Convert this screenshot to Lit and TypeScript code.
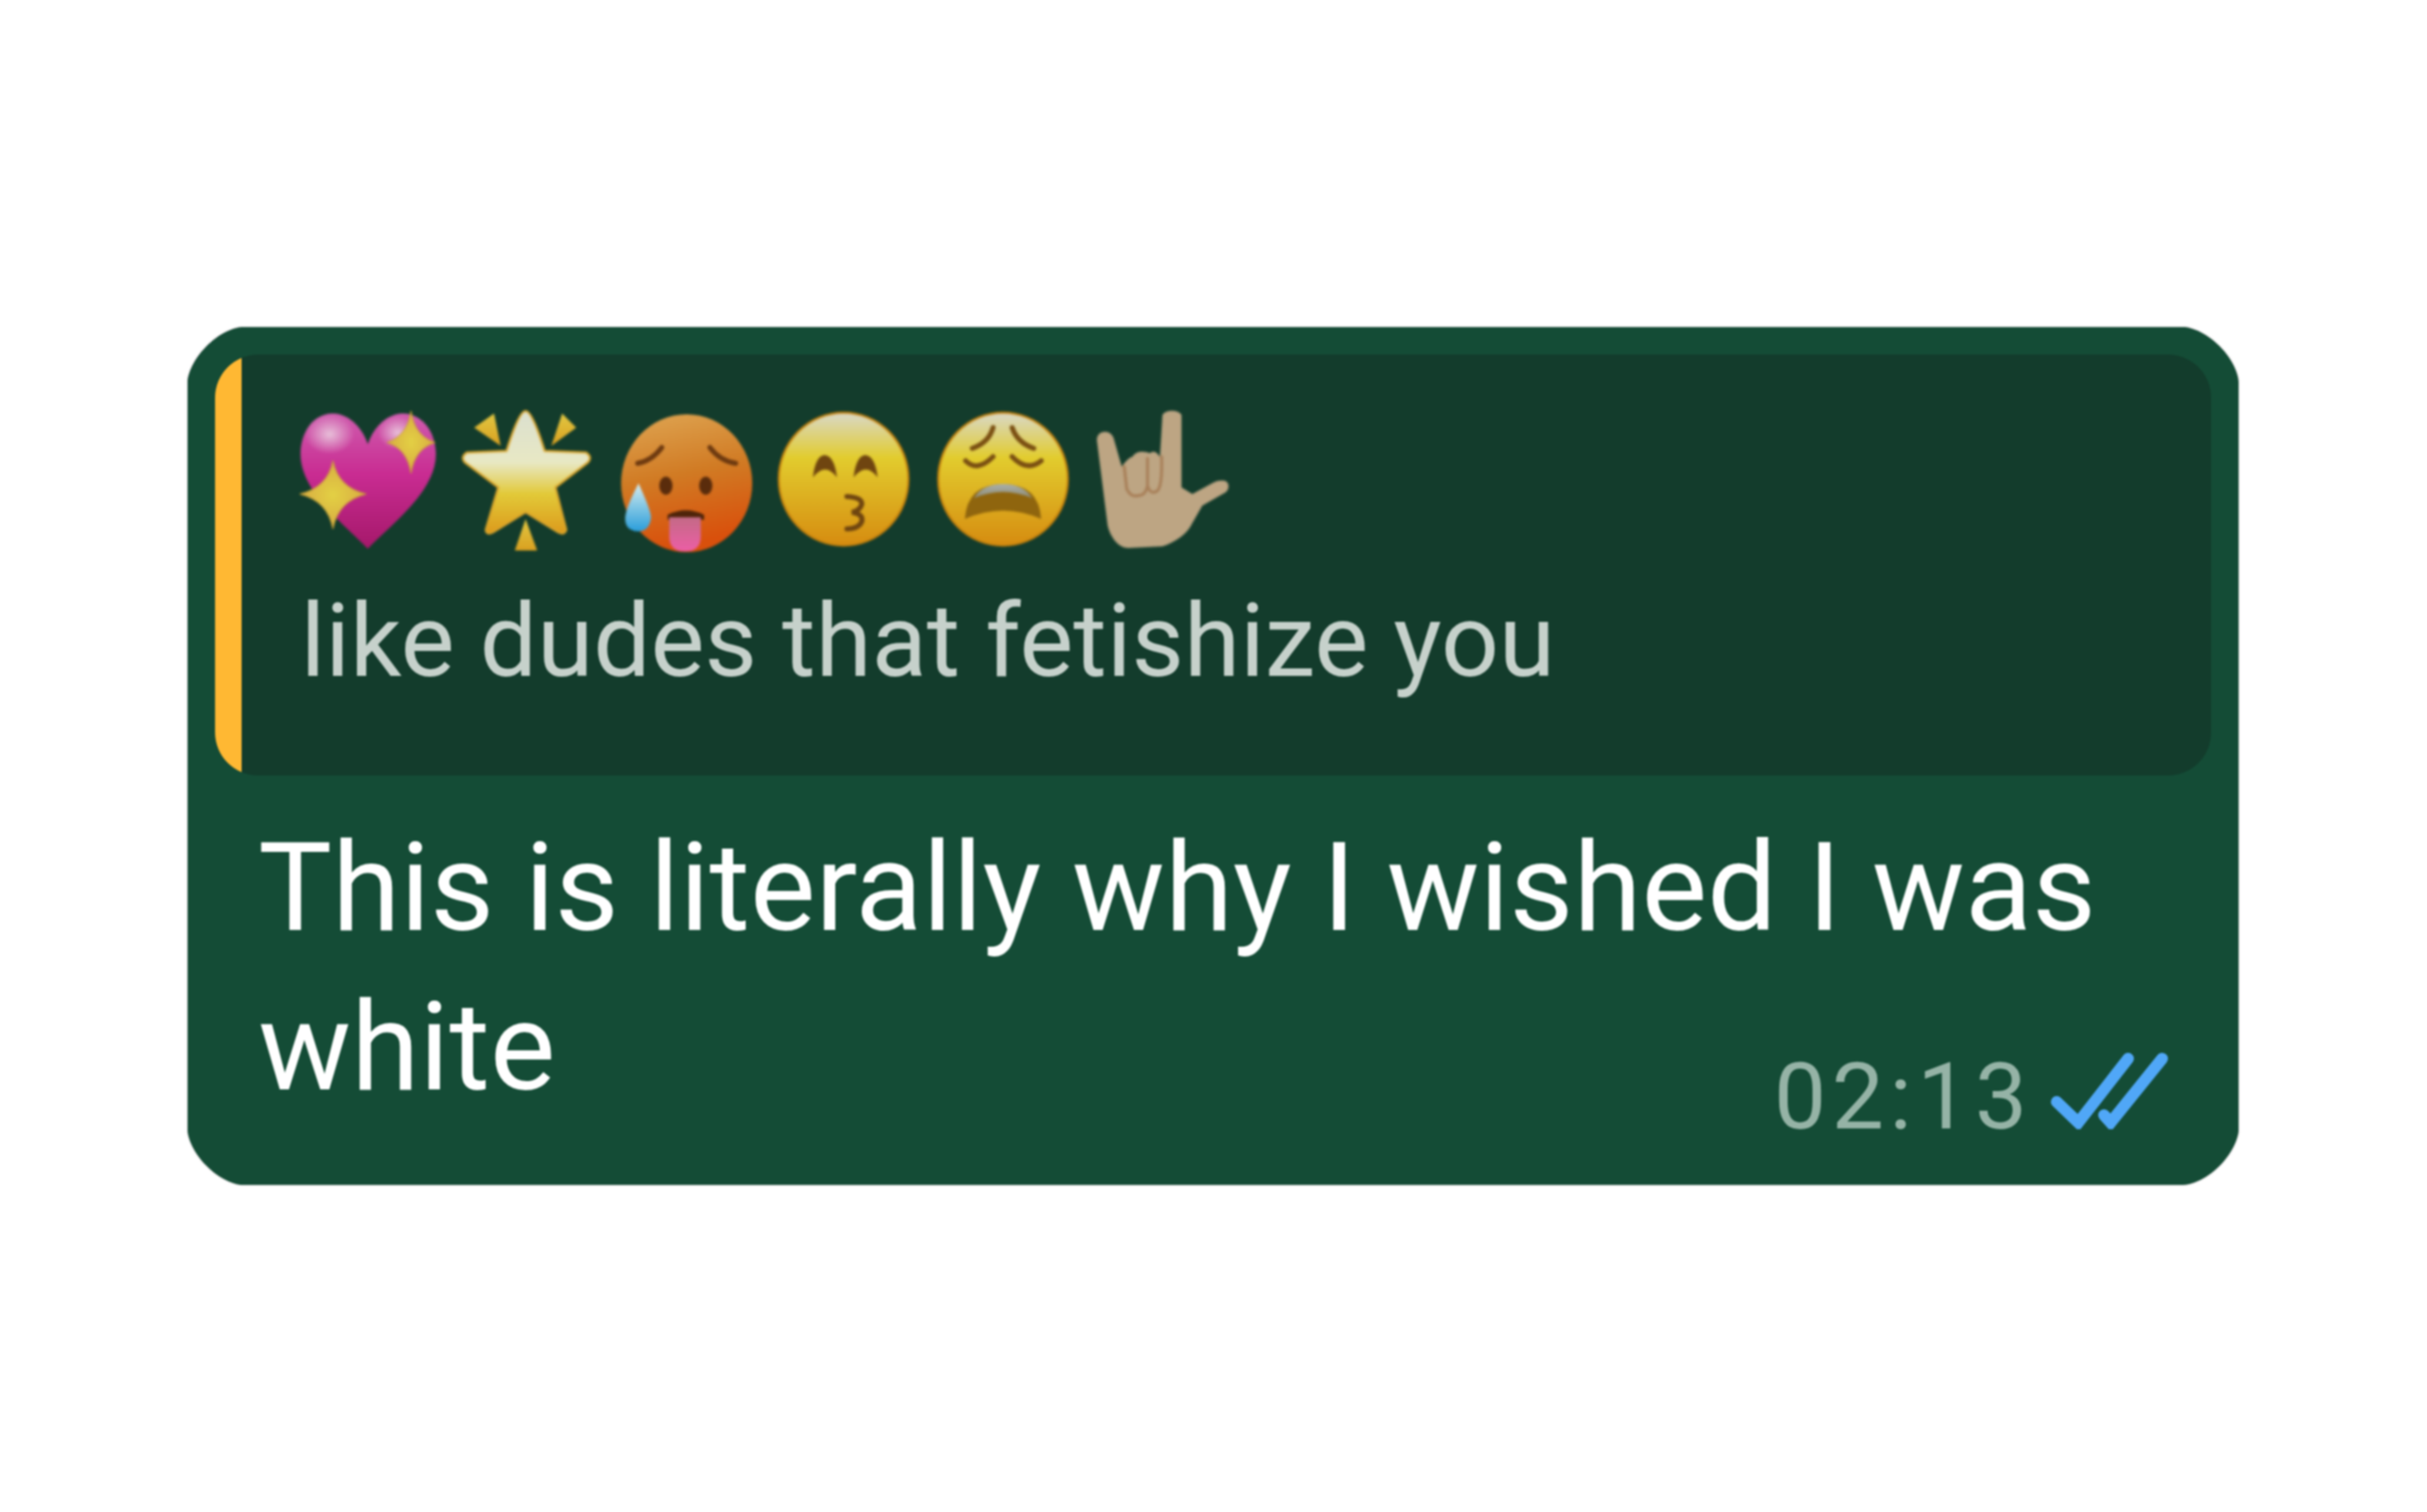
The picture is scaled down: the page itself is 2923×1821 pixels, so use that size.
import { LitElement, html, css, svg } from "lit";
import { customElement } from "lit/decorators.js";

const sparkle = (cx: number, cy: number, w: number, up: number, down: number) =>
  svg`<path d="M${cx} ${cy - up} Q${cx + w * 0.16} ${cy - up * 0.2} ${cx + w} ${cy} Q${cx + w * 0.16} ${cy + down * 0.2} ${cx} ${cy + down} Q${cx - w * 0.16} ${cy + down * 0.2} ${cx - w} ${cy} Q${cx - w * 0.16} ${cy - up * 0.2} ${cx} ${cy - up}Z" fill="url(#spark)" stroke="#c8a032" stroke-width="1"/>`;

const defs = svg`<defs>
  <linearGradient id="heart" x1="0" y1="0" x2="0" y2="1"><stop offset="0" stop-color="#cf5cae"/><stop offset=".45" stop-color="#c92c92"/><stop offset="1" stop-color="#a5186a"/></linearGradient>
  <radialGradient id="gloss"><stop offset="0" stop-color="#ecd3e2" stop-opacity=".85"/><stop offset="1" stop-color="#ecd3e2" stop-opacity="0"/></radialGradient>
  <radialGradient id="spark"><stop offset="0" stop-color="#e3d044"/><stop offset="1" stop-color="#d8ac42"/></radialGradient>
  <linearGradient id="star" x1="0" y1="0" x2="0" y2="1"><stop offset="0" stop-color="#dbe0cf"/><stop offset=".42" stop-color="#e8e8c4"/><stop offset=".68" stop-color="#e2c938"/><stop offset="1" stop-color="#dc9a1c"/></linearGradient>
  <linearGradient id="spike" x1="0" y1="0" x2="0" y2="1"><stop offset="0" stop-color="#e2c842"/><stop offset="1" stop-color="#d9a020"/></linearGradient>
  <linearGradient id="hot" x1="0" y1="0" x2=".2" y2="1"><stop offset="0" stop-color="#dfa653"/><stop offset=".5" stop-color="#d17b24"/><stop offset="1" stop-color="#d9500c"/></linearGradient>
  <linearGradient id="yellow" x1="0" y1="0" x2="0" y2="1"><stop offset="0" stop-color="#d9d8c8"/><stop offset=".34" stop-color="#e2cc2e"/><stop offset="1" stop-color="#d68c10"/></linearGradient>
  <linearGradient id="drop" x1="0" y1="0" x2="0" y2="1"><stop offset="0" stop-color="#d6ecee"/><stop offset="1" stop-color="#2a9edb"/></linearGradient>
  <linearGradient id="tongue" x1="0" y1="0" x2="0" y2="1"><stop offset="0" stop-color="#c46a86"/><stop offset="1" stop-color="#ec5ea6"/></linearGradient>
  <linearGradient id="teeth" x1="0" y1="0" x2="0" y2="1"><stop offset="0" stop-color="#aab0ac"/><stop offset="1" stop-color="#8d8a70"/></linearGradient>
</defs>`;

const emojis = [
  svg`<path d="M86 42C78 18 60 5 44 5C20 5 5 28 5 54C5 100 60 140 86 168C112 140 168 100 168 54C168 28 152 5 128 5C112 5 94 18 86 42Z" fill="url(#heart)"/>
    <ellipse cx="40" cy="30" rx="30" ry="24" fill="url(#gloss)"/>
    <ellipse cx="122" cy="28" rx="24" ry="20" fill="url(#gloss)"/>
    ${sparkle(138, 40, 29, 38, 37)}${sparkle(44, 102, 40, 40, 42)}`,
  svg`<path d="M47 5L23 22L55 44Z" fill="url(#spike)"/>
    <path d="M129 5L146 22L116 44Z" fill="url(#spike)"/>
    <path d="M85 132L99 170H72Z" fill="url(#spike)"/>
    <path d="M85 2Q93 2 108 50L158 52Q166 58 160 64L121 94L134 145Q132 152 124 148L85 124L46 148Q38 152 37 145L52 94L12 64Q6 58 14 52L62 50Q77 2 85 2Z" fill="url(#star)" stroke="#dca52a" stroke-width="2.5"/>`,
  svg`<ellipse cx="88" cy="89" rx="79" ry="83" fill="url(#hot)"/>
    <path d="M29 65Q46 62 58 46M116 46Q128 62 147 65" fill="none" stroke="#6e3a10" stroke-width="6" stroke-linecap="round"/>
    <ellipse cx="63" cy="92" rx="8" ry="11" fill="#5a2c0c"/><ellipse cx="111" cy="92" rx="8" ry="11" fill="#5a2c0c"/>
    <path d="M65 127Q87 116 109 127L109 133H65Z" fill="#4f2409"/>
    <path d="M67 130H105V153Q105 171 86 171Q67 171 67 153Z" fill="url(#tongue)"/>
    <path d="M30 89Q46 124 45 131Q43 147 29 147Q13 146 14 130Q15 118 30 89Z" fill="url(#drop)"/>`,
  svg`<ellipse cx="86" cy="84" rx="78" ry="80" fill="url(#yellow)" stroke="#c8820c" stroke-width="2.5"/>
    <path d="M49 82Q52 56 63 55Q75 56 78 82Q64 63 49 82ZM98 82Q101 56 112 55Q124 56 127 82Q113 63 98 82Z" fill="#6f4510"/>
    <path d="M90 105Q108 106 108 114Q106 122 96 124Q110 126 108 135Q104 144 90 144" fill="none" stroke="#6f4510" stroke-width="6" stroke-linecap="round"/>`,
  svg`<ellipse cx="87" cy="84" rx="78" ry="80" fill="url(#yellow)" stroke="#c8820c" stroke-width="2.5"/>
    <path d="M75 22Q70 40 50 47M98 22Q104 40 124 47M42 62Q56 76 75 57M98 57Q116 76 133 62" fill="none" stroke="#7a4f12" stroke-width="6" stroke-linecap="round"/>
    <path d="M41 132Q44 90 87 90Q130 90 133 132Q87 112 41 132Z" fill="#8f650e"/>
    <path d="M52 107Q62 90 87 90Q112 90 122 107Q87 92 52 107Z" fill="url(#teeth)"/>`,
  svg`<path d="M19 27C13 27 9 31 9 37L22 140C26 156 36 167 47 167L88 165C104 160 118 150 124 137L136 116L164 100C169 96 169 88 163 86C157 85 152 86 146 90L124 102L111 94V7C108 0 91 0 88 7L85 57C80 50 76 50 73 53C66 50 56 50 52 57C48 58 44 62 39 69L29 34C27 30 24 27 19 27Z" fill="#bda583"/>
    <path d="M42 69L45 96Q50 106 58 104Q68 104 70 92L70 59M70 92Q74 104 82 98Q88 92 87 57" fill="none" stroke="#a87f58" stroke-width="3.5" stroke-linecap="round"/>`,
];

@customElement("app-root")
export class AppRoot extends LitElement {
  static styles = css`
    :host {
      display: block;
      box-sizing: border-box;
      min-height: 1821px;
      padding: 394px 0 0 226px;
      background: #fff;
      font-family: Roboto, "Liberation Sans", sans-serif;
    }
    .bubble {
      box-sizing: border-box;
      width: 2470px;
      height: 1033px;
      padding: 33px 33px 0;
      border-radius: 66px;
      corner-shape: superellipse(0.7);
      background: #144c36;
      filter: blur(1.2px);
      box-shadow: 0 0 2px rgba(80, 80, 80, 0.7);
    }
    .quote {
      display: flex;
      height: 507px;
      overflow: hidden;
      border-radius: 52px;
      background: #133c2c;
    }
    .accent {
      flex: none;
      width: 32px;
      background: #ffb833;
    }
    .quote-body {
      padding: 66px 0 0 66px;
    }
    .emojis {
      display: flex;
      gap: 21px;
    }
    .emojis svg {
      flex: none;
      width: 170px;
      height: 170px;
      overflow: visible;
      filter: blur(1.2px);
    }
    .quote-text {
      margin: 37px 0 0 5px;
      color: #c6d1cb;
      font-size: 122.5px;
      line-height: 144px;
      white-space: nowrap;
    }
    .message {
      padding: 39px 0 0 52px;
      color: #fff;
      font-size: 149px;
      line-height: 192px;
    }
    .line {
      white-space: nowrap;
    }
    .last {
      display: flex;
      justify-content: space-between;
    }
    .meta {
      display: flex;
      align-items: flex-start;
      gap: 22px;
      align-self: flex-end;
      margin: 0 50px -14px 0;
    }
    .time {
      color: #95b3a6;
      font-size: 112px;
      letter-spacing: 6.5px;
      line-height: 100px;
    }
    .check {
      width: 143px;
      height: 95px;
      margin-top: -6px;
      fill: none;
      stroke: #50a7f7;
      stroke-width: 14;
      stroke-linecap: round;
    }
  `;

  render() {
    return html`
      <div class="bubble">
        <div class="quote">
          <div class="accent"></div>
          <div class="quote-body">
            <div class="emojis">
              ${emojis.map(
                (e, i) => html`<svg viewBox="0 0 170 170">${i === 0 ? defs : ""}${e}</svg>`
              )}
            </div>
            <p class="quote-text">like dudes that fetishize you</p>
          </div>
        </div>
        <div class="message">
          <div class="line">This is literally why I wished I was</div>
          <div class="last">
            <span>white</span>
            <div class="meta">
              <span class="time">02:13</span>
              <svg class="check" viewBox="0 0 143 95">
                <path d="M7 62L33 87L93 10" />
                <path d="M64 78L72 87L134 10" />
              </svg>
            </div>
          </div>
        </div>
      </div>
    `;
  }
}
